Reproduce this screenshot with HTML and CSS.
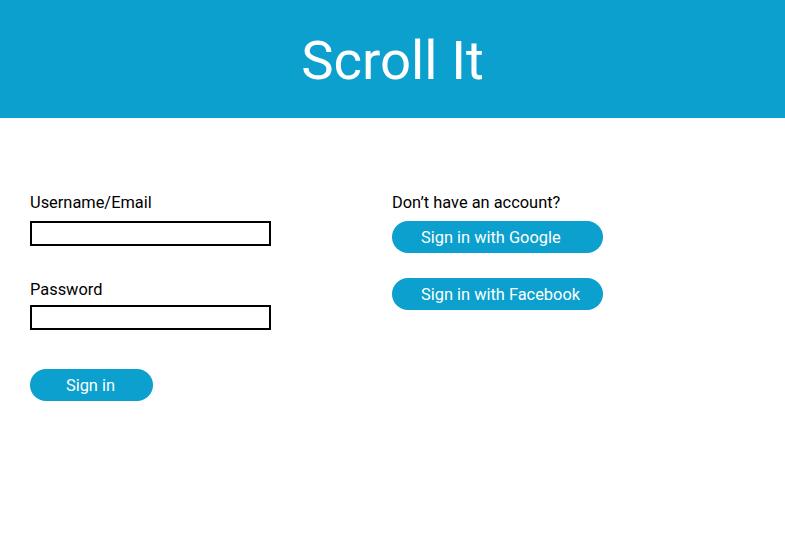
FILE: index.html
```html
<!DOCTYPE html>
<html>
<head>
<meta charset="utf-8">
<link rel="stylesheet" href="styles.css">
</head>
<body>
<header class="topbar"><h1 class="title">Scroll It</h1></header>
<main class="content">
  <form class="login">
    <label class="field-label" for="user">Username/Email</label>
    <input class="field-input" id="user" type="text">
    <label class="field-label second" for="pass">Password</label>
    <input class="field-input tight" id="pass" type="password">
    <button class="btn btn-signin" type="button">Sign in</button>
  </form>
  <section class="social">
    <p class="field-label">Don’t have an account?</p>
    <button class="btn btn-social" type="button">Sign in with Google</button>
    <button class="btn btn-social fb" type="button">Sign in with Facebook</button>
  </section>
</main>
</body>
</html>
```
FILE: styles.css
```css
html, body {
  margin: 0;
  padding: 0;
  background: #fff;
  font-family: Roboto, "Liberation Sans", sans-serif;
  color: #000;
}
.topbar {
  background: #0ba0cd;
  height: 118px;
  display: flex;
  align-items: center;
  justify-content: center;
}
.title {
  margin: 0;
  color: #fff;
  font-weight: 400;
  font-size: 54.5px;
  line-height: 1;
  padding-top: 2px;
}
.content {
  display: flex;
  padding: 75px 30px 0 30px;
}
.login {
  width: 362px;
  display: flex;
  flex-direction: column;
  align-items: flex-start;
}
.field-label {
  display: block;
  margin: 0;
  font-size: 16.4px;
  line-height: 19px;
}
.field-input {
  box-sizing: border-box;
  width: 241px;
  height: 25px;
  margin: 9px 0 0 0;
  border: 2px solid #000;
  padding: 0;
  background: #fff;
  outline: none;
}
.field-input + .field-label.second {
  margin-top: 34px;
}
.field-input.tight {
  margin-top: 6px;
}
.btn {
  border: none;
  background: #0ba0cd;
  color: #fff;
  font-family: Roboto, "Liberation Sans", sans-serif;
  font-size: 16.4px;
  height: 32px;
  border-radius: 16px;
  padding: 0;
  cursor: pointer;
}
.btn-signin {
  width: 123px;
  margin-top: 39px;
  text-align: center;
  padding-right: 2px;
}
.social {
  display: flex;
  flex-direction: column;
  align-items: flex-start;
}
.btn-social {
  width: 211px;
  text-align: left;
  padding-left: 29px;
  margin-top: 9px;
}
.btn-social.fb {
  margin-top: 25px;
}
```
